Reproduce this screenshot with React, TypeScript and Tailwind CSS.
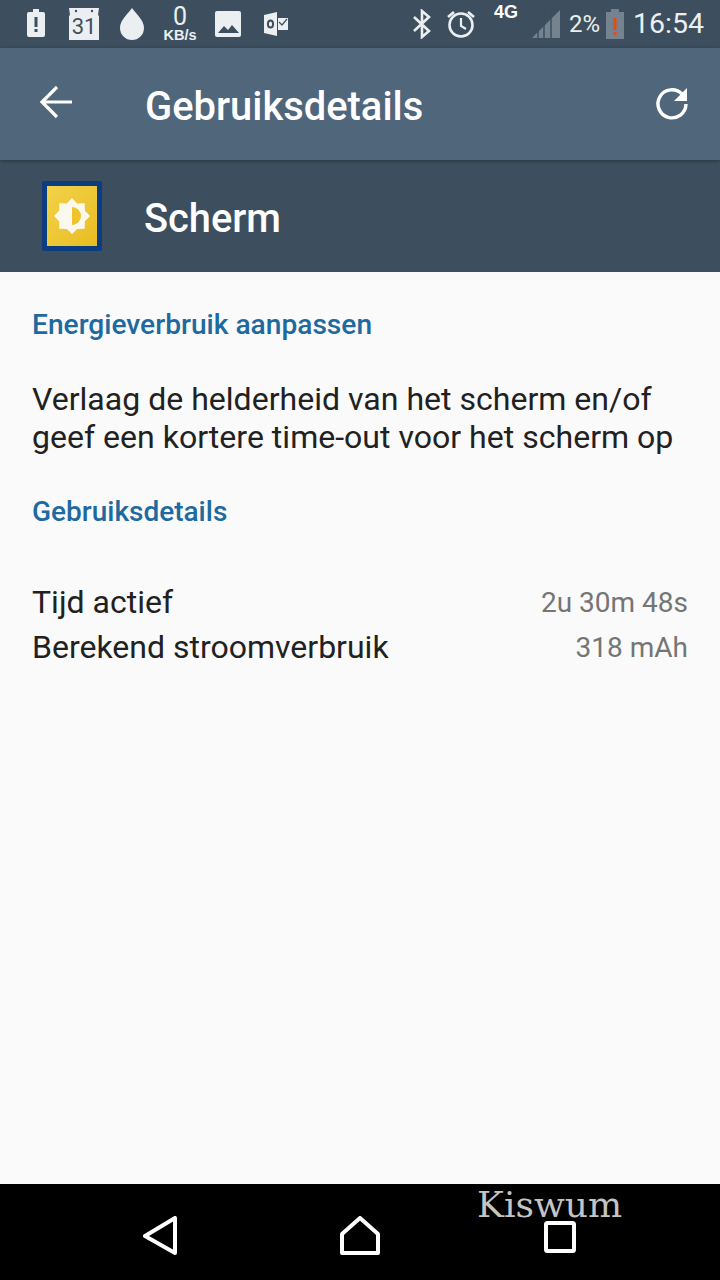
const roboto = { fontFamily: "Roboto, sans-serif" };

function StatusLeft() {
  return (
    <div className="flex items-center">
      {/* battery alert */}
      <svg width="18" height="30" viewBox="0 0 18 30" className="ml-[27px]">
        <path d="M6 0h6v3h4a2 2 0 0 1 2 2v21a2 2 0 0 1-2 2H2a2 2 0 0 1-2-2V5a2 2 0 0 1 2-2h4z" fill="#eceff1" />
        <rect x="7.5" y="8" width="3" height="10" fill="#3d4f5e" />
        <rect x="7.5" y="20" width="3" height="3" fill="#3d4f5e" />
      </svg>
      {/* calendar */}
      <div className="relative ml-[23px] w-[32px] h-[32px]">
        <svg width="32" height="32" viewBox="0 0 32 32" className="absolute inset-0">
          <path d="M1 0h30l-1 7 1 1v24H1V8l1-1z" fill="#eceff1" />
          <circle cx="8" cy="3" r="1.2" fill="#3d4f5e" />
          <circle cx="24" cy="3" r="1.2" fill="#3d4f5e" />
        </svg>
        <div className="absolute inset-x-0 top-[8px] text-center text-[22px] leading-[22px] text-[#3d4f5e]" style={roboto}>31</div>
      </div>
      {/* drop */}
      <svg width="26" height="32" viewBox="0 0 26 32" className="ml-[19px]">
        <path d="M13 0C9 6 1 12 1 20a12 12 0 0 0 24 0C25 12 17 6 13 0z" fill="#eceff1" />
      </svg>
      {/* net speed */}
      <div className="ml-[17px] w-[36px] flex flex-col items-center text-[#eceff1]">
        <span className="text-[25px] leading-[20px] h-[22px]" style={roboto}>0</span>
        <span className="text-[14.5px] leading-[13px] font-bold" style={{ fontFamily: "'Liberation Sans', sans-serif" }}>KB/s</span>
      </div>
      {/* picture */}
      <svg width="26" height="26" viewBox="0 0 26 26" className="ml-[17px]">
        <rect width="26" height="26" rx="2" fill="#eceff1" />
        <path d="M3 22l6-7 4 4 4-5 7 8z" fill="#3d4f5e" />
      </svg>
      {/* outlook */}
      <svg width="24" height="24" viewBox="0 0 24 24" className="ml-[23px]">
        <path d="M0 3l13-3v24L0 21z" fill="#eceff1" />
        <rect x="14" y="6" width="10" height="12" fill="#eceff1" />
        <path d="M15 10l3 3 5-6" fill="none" stroke="#3d4f5e" strokeWidth="1.2" />
        <ellipse cx="6.5" cy="12" rx="2.6" ry="3.6" fill="none" stroke="#3d4f5e" strokeWidth="2" />
      </svg>
    </div>
  );
}

function StatusRight() {
  return (
    <div className="flex items-center">
      {/* bluetooth */}
      <svg width="20" height="30" viewBox="0 0 20 30">
        <path d="M2 8l15 14-7 6V2l7 6L2 22" fill="none" stroke="#eceff1" strokeWidth="2.6" />
      </svg>
      {/* alarm */}
      <svg width="30" height="30" viewBox="0 0 30 30" className="ml-[14px]">
        <circle cx="15" cy="16" r="11.5" fill="none" stroke="#eceff1" strokeWidth="2.6" />
        <path d="M15 9v8l5 3" fill="none" stroke="#eceff1" strokeWidth="2.2" />
        <path d="M2 8l6-5M28 8l-6-5" fill="none" stroke="#eceff1" strokeWidth="2.6" />
      </svg>
      <div className="ml-[18px] w-[28px] h-[36px] text-[18px] leading-[20px] font-bold text-white -mt-[8px]" style={{ fontFamily: "'Liberation Sans', sans-serif" }}>4G</div>
      {/* signal */}
      <svg width="28" height="30" viewBox="0 0 28 30" className="ml-[10px]">
        <path d="M0 29L28 1v28z" fill="#75838e" />
        <path d="M6 29V0M12 29V0M19 29V0" stroke="#3d4f5e" strokeWidth="1.5" />
      </svg>
      <span className="ml-[9px] text-[24px] leading-[28px] text-[#eceff1]" style={roboto}>2%</span>
      {/* battery */}
      <svg width="18" height="30" viewBox="0 0 18 30" className="ml-[6px]">
        <path d="M5 0h8v3h5v27H0V3h5z" fill="#75838e" />
        <rect x="7.5" y="9" width="3" height="12" fill="#e64a19" />
        <rect x="7.5" y="23" width="3" height="3" fill="#e64a19" />
      </svg>
      <span className="ml-[9px] mr-[16px] text-[28.5px] leading-[32px] text-[#eceff1]" style={roboto}>16:54</span>
    </div>
  );
}

function ScreenIcon() {
  return (
    <div className="w-[60px] h-[70px] bg-[#0b3d82] rounded-[2px] p-[5px]">
      <div className="w-full h-full bg-gradient-to-br from-[#f2d247] to-[#e9bd1f] flex items-center justify-center">
        <svg width="36" height="36" viewBox="0 0 36 36">
          <path d="M18 0l5.2 5.5 7.5-.2.2 7.5L36 18l-5.1 5.2-.2 7.5-7.5.2L18 36l-5.2-5.1-7.5-.2-.2-7.5L0 18l5.1-5.2.2-7.5 7.5.2z" fill="#fbf8ee" />
          <path d="M18 9a9 9 0 0 1 0 18z" fill="#eec42a" />
        </svg>
      </div>
    </div>
  );
}

export default function App() {
  return (
    <div className="w-[720px] h-[1280px] flex flex-col bg-[#fafafa]" style={roboto}>
      <div className="h-[48px] bg-[#3d4f5e] flex items-center justify-between">
        <StatusLeft />
        <StatusRight />
      </div>

      <div className="h-[112px] bg-[#50667b] flex items-center relative z-10 shadow-[0_1px_4px_rgba(0,0,0,0.35)]">
        {/* back arrow */}
        <svg width="34" height="34" viewBox="0 0 34 34" className="ml-[39px] -mt-[4px]">
          <path d="M33 17H4M18 2L3 17l15 15" fill="none" stroke="#fff" strokeWidth="3.2" />
        </svg>
        <h1 className="ml-[72px] pt-[6px] text-[39.9px] font-medium text-white leading-[44px]">Gebruiksdetails</h1>
        <svg width="38" height="38" viewBox="0 0 38 38" className="ml-auto mr-[29px]">
          <path d="M29 9A14 14 0 1 0 33 19" fill="none" stroke="#fff" strokeWidth="3.4" />
          <path d="M34 3v13H21z" fill="#fff" />
        </svg>
      </div>

      <div className="h-[112px] bg-[#3d4f5e] flex items-center">
        <div className="ml-[42px]"><ScreenIcon /></div>
        <span className="ml-[42px] pt-[6px] text-[39.8px] text-white font-medium leading-[44px]">Scherm</span>
      </div>

      <div className="flex-1 px-[32px]">
        <h2 className="mt-[36px] text-[28.15px] leading-[34px] font-medium text-[#1e6aa0]">Energieverbruik aanpassen</h2>
        <p className="mt-[38px] text-[32.05px] leading-[38px] text-[#212121]">
          Verlaag de helderheid van het scherm en/of<br />geef een kortere time-out voor het scherm op
        </p>
        <h2 className="mt-[39px] text-[28px] leading-[34px] font-medium text-[#1e6aa0]">Gebruiksdetails</h2>
        <div className="mt-[50px] flex flex-col">
          <div className="flex items-center justify-between h-[45px]">
            <span className="text-[32px] text-[#212121]">Tijd actief</span>
            <span className="text-[28px] text-[#757575] pt-[2px]">2u 30m 48s</span>
          </div>
          <div className="flex items-center justify-between h-[46px]">
            <span className="text-[32px] text-[#212121]">Berekend stroomverbruik</span>
            <span className="text-[28px] text-[#757575] pt-[2px]">318 mAh</span>
          </div>
        </div>
      </div>

      <div className="h-[96px] bg-black relative flex items-center">
        <svg width="36" height="40" viewBox="0 0 36 40" className="ml-[142px] mt-[8px]">
          <path d="M33 2v35L3 20z" fill="none" stroke="#fff" strokeWidth="4" strokeLinejoin="round" />
        </svg>
        <svg width="40" height="40" viewBox="0 0 40 40" className="ml-[162px] mt-[8px]">
          <path d="M2 37V18L20 2l18 16v19z" fill="none" stroke="#fff" strokeWidth="4" strokeLinejoin="round" />
        </svg>
        <svg width="32" height="32" viewBox="0 0 32 32" className="ml-[164px] mt-[10px]">
          <rect x="2" y="2" width="28" height="28" rx="1.5" fill="none" stroke="#fff" strokeWidth="4" />
        </svg>
        <span className="absolute left-[477px] top-[1px] text-[36px] leading-[40px] text-[#c4c4c4]" style={{ fontFamily: "'DejaVu Serif', serif" }}>Kiswum</span>
      </div>
    </div>
  );
}
